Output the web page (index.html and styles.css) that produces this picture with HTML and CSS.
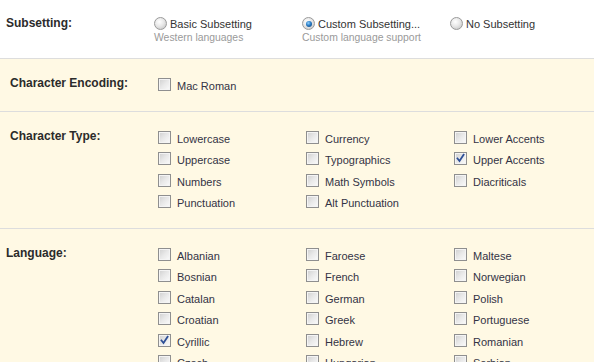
FILE: index.html
```html
<!DOCTYPE html>
<html>
<head>
<meta charset="utf-8">
<link rel="stylesheet" href="styles.css">
</head>
<body>
<div class="panel">
  <section class="sec sec-subset">
    <div class="label label-narrow">Subsetting:</div>
    <div class="radios">
      <div class="ropt">
        <div class="rline"><span class="radio"></span><span class="rtext">Basic Subsetting</span></div>
        <div class="hint">Western languages</div>
      </div>
      <div class="ropt">
        <div class="rline"><span class="radio on"></span><span class="rtext">Custom Subsetting...</span></div>
        <div class="hint">Custom language support</div>
      </div>
      <div class="ropt">
        <div class="rline"><span class="radio"></span><span class="rtext">No Subsetting</span></div>
      </div>
    </div>
  </section>

  <section class="sec sec-y">
    <div class="label">Character Encoding:</div>
    <div class="checks">
      <div class="copt"><span class="cb"></span><span class="ctext">Mac Roman</span></div>
    </div>
  </section>

  <section class="sec sec-y">
    <div class="label">Character Type:</div>
    <div class="checks">
      <div class="copt"><span class="cb"></span><span class="ctext">Lowercase</span></div>
      <div class="copt"><span class="cb"></span><span class="ctext">Currency</span></div>
      <div class="copt"><span class="cb"></span><span class="ctext">Lower Accents</span></div>
      <div class="copt"><span class="cb"></span><span class="ctext">Uppercase</span></div>
      <div class="copt"><span class="cb"></span><span class="ctext">Typographics</span></div>
      <div class="copt"><span class="cb"><svg class="tick" viewBox="0 0 11 11" width="11" height="11"><path d="M2.5 5.5 L4.5 8 L8.6 1.8" fill="none" stroke="#2d4f96" stroke-width="1.8" stroke-linecap="square"/></svg></span><span class="ctext">Upper Accents</span></div>
      <div class="copt"><span class="cb"></span><span class="ctext">Numbers</span></div>
      <div class="copt"><span class="cb"></span><span class="ctext">Math Symbols</span></div>
      <div class="copt"><span class="cb"></span><span class="ctext">Diacriticals</span></div>
      <div class="copt"><span class="cb"></span><span class="ctext">Punctuation</span></div>
      <div class="copt"><span class="cb"></span><span class="ctext">Alt Punctuation</span></div>
    </div>
  </section>

  <section class="sec sec-y">
    <div class="label label-narrow">Language:</div>
    <div class="checks">
      <div class="copt"><span class="cb"></span><span class="ctext">Albanian</span></div>
      <div class="copt"><span class="cb"></span><span class="ctext">Faroese</span></div>
      <div class="copt"><span class="cb"></span><span class="ctext">Maltese</span></div>
      <div class="copt"><span class="cb"></span><span class="ctext">Bosnian</span></div>
      <div class="copt"><span class="cb"></span><span class="ctext">French</span></div>
      <div class="copt"><span class="cb"></span><span class="ctext">Norwegian</span></div>
      <div class="copt"><span class="cb"></span><span class="ctext">Catalan</span></div>
      <div class="copt"><span class="cb"></span><span class="ctext">German</span></div>
      <div class="copt"><span class="cb"></span><span class="ctext">Polish</span></div>
      <div class="copt"><span class="cb"></span><span class="ctext">Croatian</span></div>
      <div class="copt"><span class="cb"></span><span class="ctext">Greek</span></div>
      <div class="copt"><span class="cb"></span><span class="ctext">Portuguese</span></div>
      <div class="copt"><span class="cb"><svg class="tick" viewBox="0 0 11 11" width="11" height="11"><path d="M2.5 5.5 L4.5 8 L8.6 1.8" fill="none" stroke="#2d4f96" stroke-width="1.8" stroke-linecap="square"/></svg></span><span class="ctext">Cyrillic</span></div>
      <div class="copt"><span class="cb"></span><span class="ctext">Hebrew</span></div>
      <div class="copt"><span class="cb"></span><span class="ctext">Romanian</span></div>
      <div class="copt"><span class="cb"></span><span class="ctext">Czech</span></div>
      <div class="copt"><span class="cb"></span><span class="ctext">Hungarian</span></div>
      <div class="copt"><span class="cb"></span><span class="ctext">Serbian</span></div>
      <div class="copt"><span class="cb"></span><span class="ctext">Danish</span></div>
      <div class="copt"><span class="cb"></span><span class="ctext">Icelandic</span></div>
      <div class="copt"><span class="cb"></span><span class="ctext">Slovak</span></div>
    </div>
  </section>
</div>
</body>
</html>
```

FILE: styles.css
```css
html, body {
  margin: 0;
  padding: 0;
  background: #ffffff;
}

body {
  font-family: "Liberation Sans", Arial, sans-serif;
  color: #333333;
  overflow: hidden;
}

.panel {
  width: 594px;
}

.sec {
  display: grid;
  grid-template-columns: 154px 1fr;
  border-bottom: 1px solid #dddddd;
  box-sizing: border-box;
}

.sec-subset {
  height: 59px;
  padding-top: 16px;
  background: #ffffff;
}

.sec-y {
  background: #fff9e4;
  padding: 15px 0;
}

.label {
  font-size: 12px;
  font-weight: bold;
  line-height: 19px;
  padding-left: 10px;
  color: #2b2b2b;
}

.sec-subset .label {
  line-height: 14px;
}

.label-narrow {
  padding-left: 6px;
}

.radios {
  display: grid;
  grid-template-columns: repeat(3, 148px);
}

.rline {
  display: flex;
  align-items: center;
  gap: 3px;
  font-size: 11px;
  line-height: 14px;
  color: #333333;
}

.rtext {
  padding-top: 1px;
}

.radio {
  width: 13px;
  height: 13px;
  border-radius: 50%;
  box-sizing: border-box;
  border: 1px solid #9a9a9a;
  background: radial-gradient(circle at 40% 35%, #ffffff 0%, #e8e8e8 45%, #bdbdbd 100%);
  position: relative;
  flex: none;
}

.radio.on::after {
  content: "";
  position: absolute;
  left: 2.5px;
  top: 2.5px;
  width: 6px;
  height: 6px;
  border-radius: 50%;
  background: radial-gradient(circle at 40% 35%, #8fd0ff 0%, #2a7cc4 45%, #0d3a70 100%);
}

.hint {
  font-size: 10.4px;
  line-height: 12px;
  margin-top: 1px;
  color: #9a9a9a;
}

.checks {
  display: grid;
  grid-template-columns: repeat(3, 148px);
  grid-auto-rows: 21.5px;
}

.copt {
  display: flex;
  align-items: center;
  gap: 6px;
  padding-left: 4px;
  font-size: 11px;
  color: #333344;
}

.ctext {
  padding-top: 3px;
}

.cb {
  width: 13px;
  height: 13px;
  box-sizing: border-box;
  border: 1px solid #8f8f8f;
  background: linear-gradient(135deg, #cfcfcf 0%, #e9e9e9 50%, #fbfbfb 100%);
  box-shadow: inset 0 0 0 1px #f4f4f4;
  flex: none;
  position: relative;
}

.tick {
  position: absolute;
  left: 0;
  top: 0;
}
```
